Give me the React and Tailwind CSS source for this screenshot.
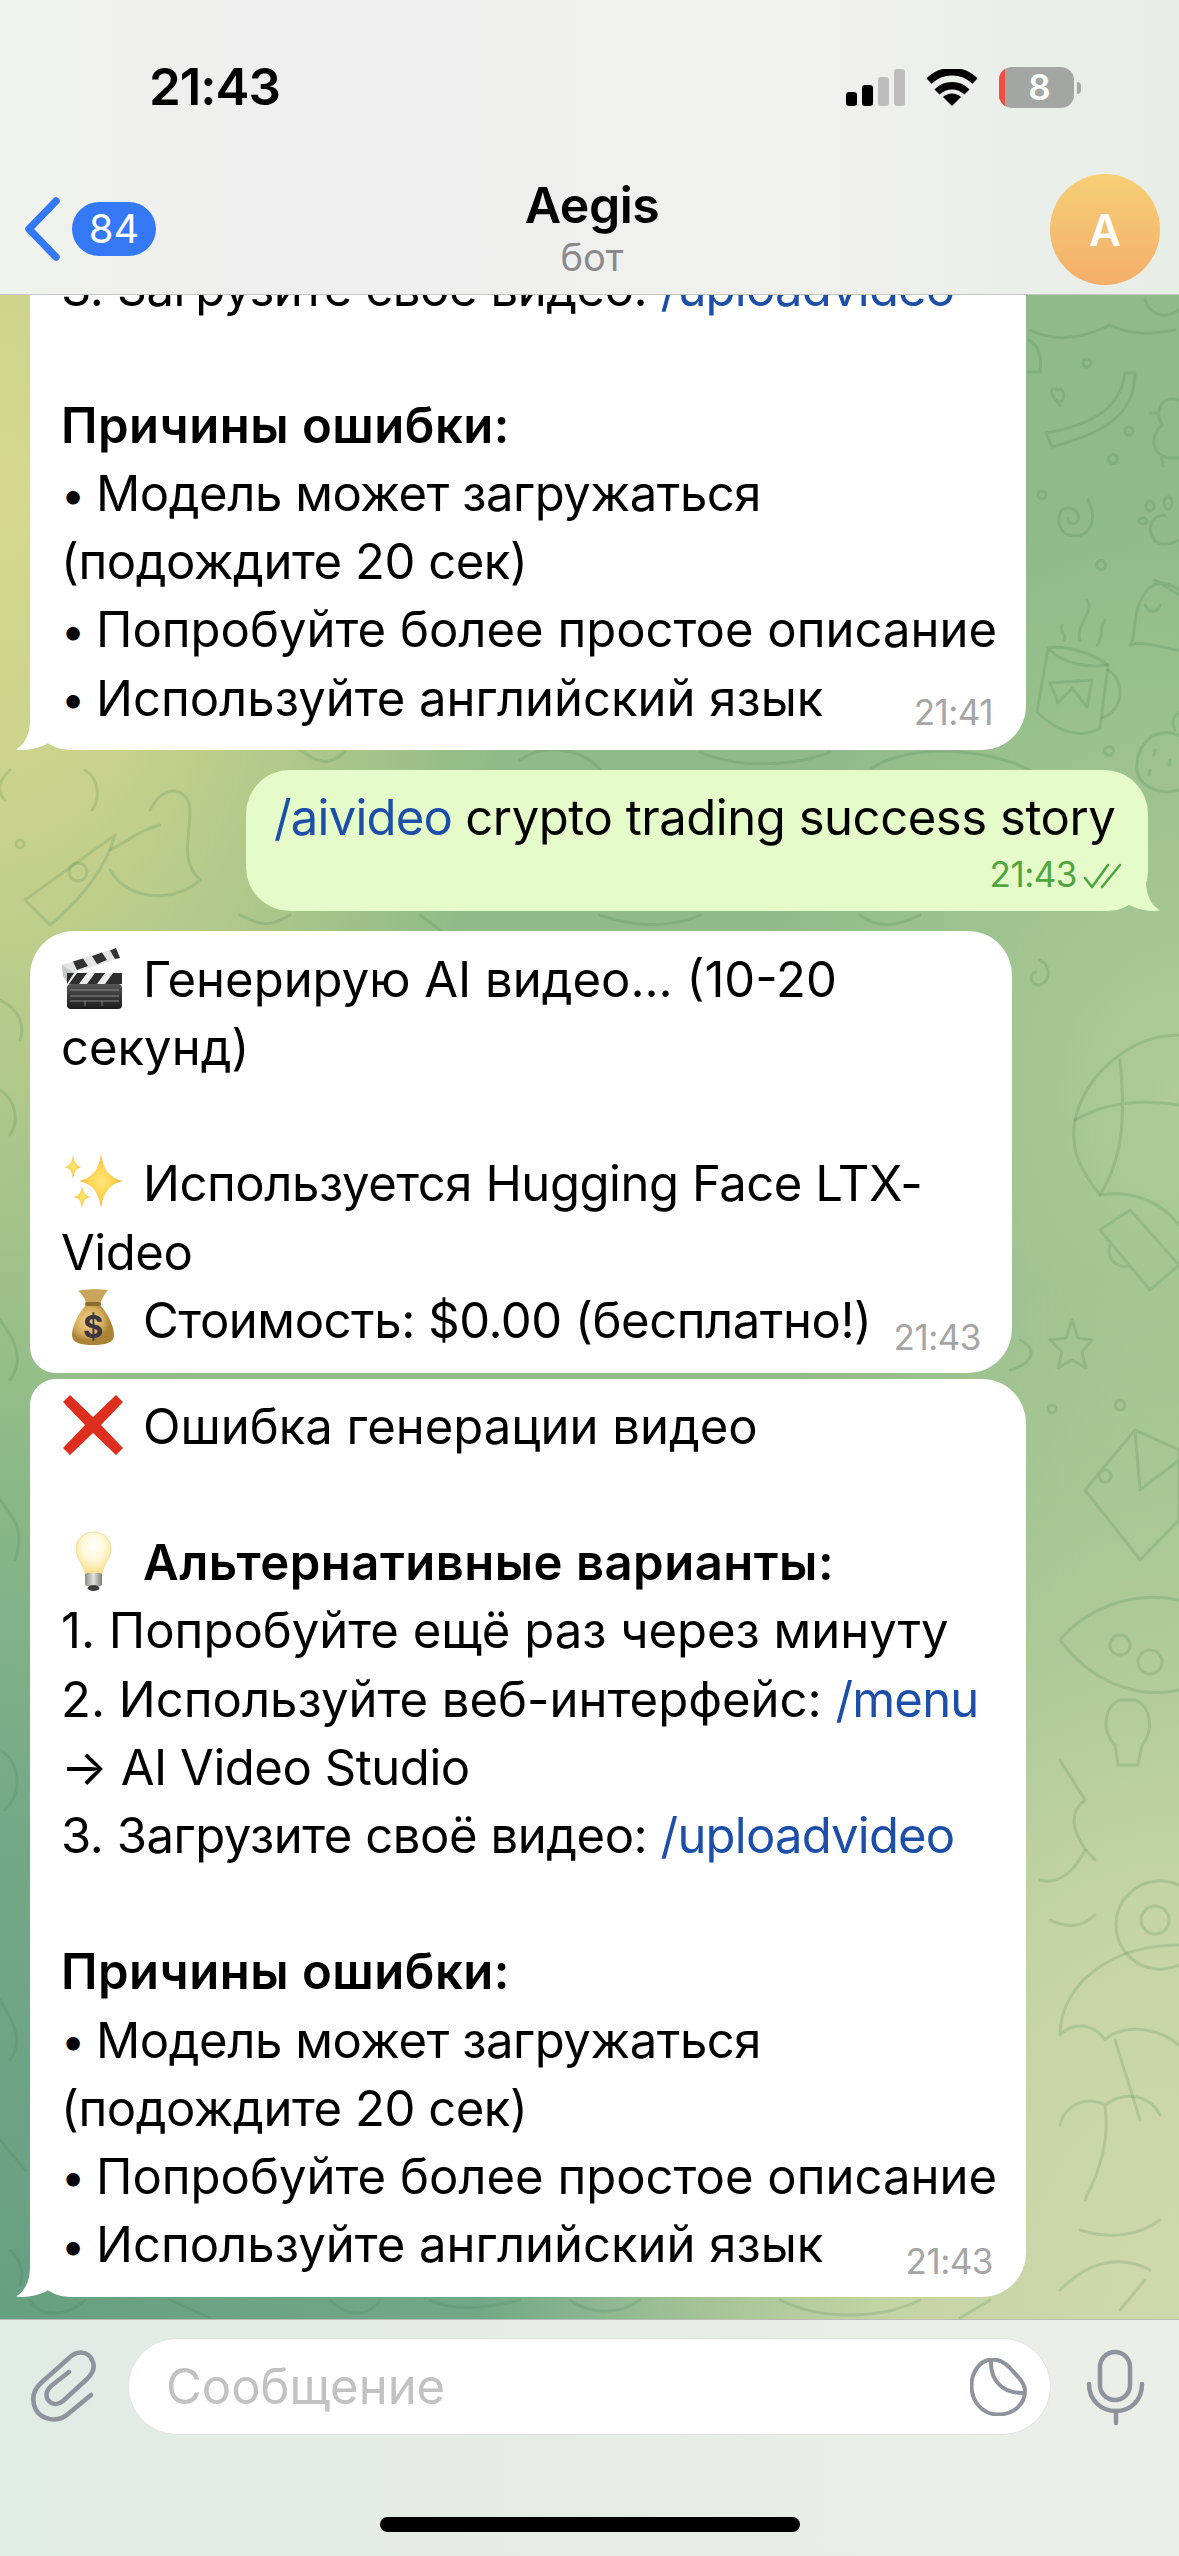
const errorLines = (
  <>
    <Line>
      <Emoji kind="cross" />
      Ошибка генерации видео
    </Line>
    <Line />
    <Line bold>
      <Emoji kind="bulb" />
      Альтернативные варианты:
    </Line>
    <Line>1. Попробуйте ещё раз через минуту</Line>
    <Line>
      2. Используйте веб-интерфейс:&nbsp;<Cmd>/menu</Cmd>
    </Line>
    <Line tight>→ AI Video Studio</Line>
    <Line tight>
      3. Загрузите своё видео:&nbsp;<Cmd>/uploadvideo</Cmd>
    </Line>
    <Line />
    <Line bold>Причины ошибки:</Line>
    <Line tight>
      <Dot />
      Модель может загружаться
    </Line>
    <Line tight>(подождите 20 сек)</Line>
    <Line>
      <Dot />
      Попробуйте более простое описание
    </Line>
    <Line>
      <Dot />
      Используйте английский язык
    </Line>
  </>
);

function Line({ children, bold, tight }) {
  let weight = "font-normal tracking-normal";
  if (bold) weight = "font-semibold tracking-[0.5px]";
  if (tight) weight = "font-normal tracking-[-0.45px]";
  return (
    <div className={`flex h-[68.2px] items-center whitespace-pre text-[49px] text-black ${weight}`}>
      {children}
    </div>
  );
}

function Dot() {
  return <span className="w-[35px] shrink-0 text-[43px]">•</span>;
}

function Cmd({ children }) {
  return <span className="tracking-[-0.8px] text-[#1d4fa8]">{children}</span>;
}

function star(cx, cy, rx, ry) {
  const k = 0.14;
  return `M${cx} ${cy - ry}Q${cx + rx * k} ${cy - ry * k} ${cx + rx} ${cy}Q${cx + rx * k} ${cy + ry * k} ${cx} ${cy + ry}Q${cx - rx * k} ${cy + ry * k} ${cx - rx} ${cy}Q${cx - rx * k} ${cy - ry * k} ${cx} ${cy - ry}Z`;
}

function Emoji({ kind }) {
  return (
    <svg viewBox="0 0 64 64" className="mr-[18px] h-[64px] w-[64px] shrink-0 -translate-y-[2px]">
      <defs>
        <radialGradient id="spark">
          <stop offset="0" stopColor="#ffe876" />
          <stop offset="0.6" stopColor="#fdd14f" />
          <stop offset="1" stopColor="#f7a93a" />
        </radialGradient>
        <radialGradient id="bag" cx="0.4" cy="0.4">
          <stop offset="0" stopColor="#f0d48a" />
          <stop offset="0.7" stopColor="#d4ac5c" />
          <stop offset="1" stopColor="#a98236" />
        </radialGradient>
        <radialGradient id="glass" cx="0.5" cy="0.35" r="0.65">
          <stop offset="0" stopColor="#ffffff" />
          <stop offset="0.5" stopColor="#fff8d8" />
          <stop offset="1" stopColor="#fbdf8e" />
        </radialGradient>
        <linearGradient id="screw" x1="0" x2="1">
          <stop offset="0" stopColor="#8b8b86" />
          <stop offset="0.5" stopColor="#e2e2dc" />
          <stop offset="1" stopColor="#7d7d78" />
        </linearGradient>
        <linearGradient id="board" x1="0" x2="0" y1="0" y2="1">
          <stop offset="0" stopColor="#555" />
          <stop offset="1" stopColor="#1c1c1c" />
        </linearGradient>
      </defs>
      {kind === "clapper" && (
        <g>
          <polygon points="1,19 55,2 59,12 5,29" fill="#e4e4e4" />
          <polygon points="12,15.5 22,12.5 27,20 16,24" fill="#333" />
          <polygon points="31,10 41,6.5 46,14 36,18" fill="#333" />
          <polygon points="49,4.5 55,2 59,12 54,13" fill="#333" />
          <polygon points="1,19 13,27 14,35 5,35 2,30" fill="#c2c7c9" />
          <rect x="6" y="27" width="55" height="11" fill="#2e2e2e" />
          <polygon points="18,38 26,27 34,27 26,38" fill="#ececec" />
          <polygon points="36,38 44,27 52,27 44,38" fill="#ececec" />
          <polygon points="6,38 13,27 16,27 8,38" fill="#ececec" />
          <rect x="6" y="38" width="55" height="25" rx="4" fill="url(#board)" />
          <path d="M9 44H58M9 50H58M9 55H58M24 55V60M41 55V60" stroke="#8a8a8a" strokeWidth="1" />
        </g>
      )}
      {kind === "sparkles" && (
        <g fill="url(#spark)">
          <path d={star(40, 31, 22, 27)} />
          <path d={star(12, 17, 8, 12)} />
          <path d={star(21, 47, 8, 11)} />
        </g>
      )}
      {kind === "money" && (
        <g>
          <path d="M17 5C23 3 40 3 47 4C44 8 40 13 39 19L25 19C25 13 21 8 17 5Z" fill="#c9a55c" />
          <path d="M25 19C18 26 11 40 11 49C11 57 20 59 32 59C44 59 53 57 53 49C53 40 46 26 39 19Z" fill="url(#bag)" />
          <rect x="24" y="16" width="16" height="4" rx="2" fill="#8c6b2c" />
          <text x="32" y="52" textAnchor="middle" fontSize="31" fontWeight="700" fontFamily="Inter, sans-serif" fill="#3c3640">
            $
          </text>
        </g>
      )}
      {kind === "cross" && (
        <polygon
          points="2,9 9,2 32,24 55,2 62,9 40,32 62,55 55,62 32,40 9,62 2,55 24,32"
          fill="#dd2e1f"
        />
      )}
      {kind === "bulb" && (
        <g>
          <path
            d="M32.5 3C22 3 15 11 15 20C15 28 22 35 24 44L41 44C43 35 50 28 50 20C50 11 43 3 32.5 3Z"
            fill="url(#glass)"
            stroke="#f8dc96"
            strokeWidth="1"
          />
          <rect x="24" y="44" width="17" height="13" rx="2" fill="url(#screw)" />
          <ellipse cx="32.5" cy="59" rx="6" ry="3" fill="#3d3d3d" />
        </g>
      )}
    </svg>
  );
}

function Time({ children, className, color = "text-[#a5a5a5]" }) {
  return (
    <span className={`absolute text-[35px] leading-none tracking-[-0.5px] ${color} ${className}`}>
      {children}
    </span>
  );
}

function Tail({ fill, flip, className }) {
  return (
    <svg
      viewBox="0 0 50 60"
      className={`absolute bottom-0 h-[60px] w-[50px] ${flip ? "-scale-x-100" : ""} ${className}`}
    >
      <path d="M14 0V30C14 45 8 55 0 59.5C12 61 27 58 35 51L42 38L14 20Z" fill={fill} />
    </svg>
  );
}

function Doodles() {
  return (
    <svg
      viewBox="0 295 1179 2024"
      className="absolute inset-0 h-full w-full"
      fill="none"
      stroke="#3c7a4a"
      strokeOpacity="0.18"
      strokeWidth="3"
      strokeLinecap="round"
      strokeLinejoin="round"
    >
      {/* right column, top */}
      <path d="M1030 330C1060 345 1090 335 1110 325C1130 335 1150 335 1175 330M1145 300C1150 315 1165 320 1179 310" />
      <path d="M1028 340C1040 345 1042 360 1040 372H1028" />
      <circle cx="1087" cy="363" r="4" />
      <circle cx="1129" cy="431" r="4" />
      <circle cx="1113" cy="459" r="4.5" />
      <circle cx="1042" cy="495" r="4" />
      <circle cx="1101" cy="565" r="4.5" />
      <circle cx="1109" cy="751" r="4.5" />
      <path d="M1046 433C1090 425 1120 410 1125 373L1135 373C1135 420 1095 435 1052 447Z" />
      <path d="M1060 405C1050 395 1048 385 1058 390C1066 385 1066 408 1056 400" />
      <path d="M1179 400C1160 395 1155 412 1162 425C1150 435 1150 455 1170 458H1179M1150 413H1158M1162 458L1163 466" />
      <path d="M1088 500C1098 520 1090 536 1075 536C1060 536 1055 520 1062 510C1070 505 1080 510 1078 520C1075 526 1068 524 1068 518" />
      <path d="M1165 515C1150 515 1148 530 1153 537C1155 547 1170 545 1179 540M1143 518a4 3 0 1 0 .1 0M1150 501a4 5 0 1 0 .1 0M1168 497a4 6 0 1 0 .1 0" />
      <path d="M1179 590C1160 575 1145 585 1137 610C1133 630 1135 640 1130 645C1150 640 1165 650 1179 650M1145 605C1150 615 1158 612 1160 605M1155 580L1179 595" />
      <path d="M1048 648L1037 712C1060 735 1085 738 1100 728L1108 665C1090 652 1065 645 1048 648Z" />
      <path d="M1050 650C1065 665 1090 668 1108 665M1108 670C1125 680 1125 710 1102 718" />
      <path d="M1050 683L1092 680L1087 707L1072 688L1058 703Z" />
      <path d="M1062 625C1058 632 1068 635 1064 640M1087 600C1095 612 1075 625 1080 640M1105 620C1098 628 1105 635 1097 645" />
      <path d="M1179 735C1150 725 1135 750 1137 770C1140 790 1165 795 1179 790M1155 750l-1 5M1170 760l-1 5M1150 770l-1 5M1175 730C1170 722 1175 715 1179 712" />
      {/* between the bubbles, left */}
      <path d="M150 810C165 780 190 790 190 810C190 840 180 860 200 880C180 900 130 905 110 870" />
      <path d="M110 850C130 840 140 830 160 825M85 770C100 780 100 800 92 810" />
      <path d="M25 900L115 835C105 870 80 900 50 925L25 900Z" />
      <circle cx="78" cy="872" r="9" />
      <path d="M10 770C0 780 -5 790 5 800M20 840a4 4 0 1 0 .1 0" />
      <path d="M0 1000C20 1010 25 1025 20 1040M0 1090C15 1100 20 1120 10 1135M0 1320C15 1340 25 1360 10 1380" />
      <path d="M300 750C320 765 330 765 345 752M520 760C540 745 580 745 600 770M700 752C740 770 800 765 830 752M870 770C900 745 980 745 1030 770" />
      <path d="M240 915C260 925 270 928 290 915M420 915L440 930M600 915C640 930 680 925 700 915M860 915C880 930 900 925 920 915" />
      {/* right of the lower bubbles */}
      <path d="M1040 960C1050 965 1052 980 1040 985C1030 985 1028 975 1036 972" />
      <path d="M1179 1035C1130 1035 1085 1075 1075 1120C1070 1150 1080 1170 1100 1195C1130 1190 1160 1200 1179 1225" />
      <path d="M1075 1120C1110 1100 1145 1100 1179 1105M1120 1060C1125 1110 1125 1155 1100 1195" />
      <path d="M1100 1230L1150 1290L1179 1265L1130 1210ZM1110 1245C1105 1260 1120 1270 1130 1265" />
      <path d="M1072 1320L1078 1338L1092 1340L1082 1352L1086 1368L1072 1360L1058 1368L1062 1352L1050 1340L1066 1338Z" />
      <path d="M1010 1370C1030 1365 1040 1350 1020 1340" />
      <path d="M1120 1400a5 5 0 1 0 .1 0M1052 1405a4 4 0 1 0 .1 0" />
      <path d="M1085 1490L1135 1430L1179 1450V1520L1140 1560L1085 1490ZM1135 1430L1140 1490L1179 1460M1105 1470a6 6 0 1 0 .1 0" />
      <path d="M1179 1600C1130 1590 1085 1610 1060 1640C1090 1680 1135 1700 1179 1690M1120 1635a10 10 0 1 0 .1 0M1150 1650a12 12 0 1 0 .1 0" />
      <path d="M1120 1700C1105 1705 1100 1730 1115 1745L1118 1765H1138L1142 1745C1155 1730 1150 1705 1135 1700Z" />
      <path d="M1060 1760L1085 1800C1065 1815 1075 1840 1095 1860" />
      <circle cx="1160" cy="1925" r="44" />
      <circle cx="1155" cy="1920" r="14" />
      <path d="M1040 1880C1060 1885 1075 1870 1085 1850M1050 1920C1070 1930 1085 1925 1095 1915" />
      <path d="M1060 2035C1060 1985 1110 1945 1179 1945M1060 2035C1075 2020 1095 2025 1105 2040C1120 2025 1155 2025 1179 2045M1115 2040L1140 2120" />
      <path d="M1085 2200C1100 2170 1110 2140 1105 2105M1105 2105C1085 2095 1065 2105 1060 2125M1105 2105C1125 2090 1150 2095 1160 2115" />
      <path d="M1080 2230C1110 2240 1140 2235 1160 2220M1060 2290C1090 2260 1120 2255 1150 2270M1120 2310L1145 2280" />
      {/* under the last bubble */}
      <path d="M30 2300C40 2320 70 2315 85 2300M170 2300L210 2318M330 2300C350 2320 370 2315 380 2300M430 2300C450 2310 480 2310 520 2300M570 2300C590 2315 620 2315 640 2300M780 2300C820 2320 880 2320 920 2300M960 2318L990 2300" />
      {/* far left strip */}
      <path d="M0 1500C15 1520 25 1530 15 1560M0 1750C18 1760 25 1790 5 1810M0 2000C12 2020 25 2040 10 2060M0 2140L25 2170M10 2250C20 2260 25 2270 20 2285" />
    </svg>
  );
}

function StatusBar() {
  return (
    <div className="flex h-[41px] items-center justify-between pl-[149px] pr-[98px]">
      <span className="text-[51px] font-semibold tracking-[-1px] text-black">21:43</span>
      <div className="flex items-center">
        <div className="flex h-[37px] items-end gap-[5px]">
          <div className="h-[14px] w-[11px] rounded-[3px] bg-black" />
          <div className="h-[21px] w-[11px] rounded-[3px] bg-black" />
          <div className="h-[29px] w-[11px] rounded-[3px] bg-[#bdbdbd]" />
          <div className="h-[37px] w-[11px] rounded-[3px] bg-[#bdbdbd]" />
        </div>
        <svg viewBox="0 0 50 37" className="ml-[22px] h-[37px] w-[50px]" fill="none" stroke="#000" strokeWidth="7.5">
          <path d="M2 12A33 33 0 0 1 48 12" />
          <path d="M10 23A21 21 0 0 1 40 23" />
          <path d="M25 37L16 28A13 13 0 0 1 34 28Z" fill="#000" stroke="none" />
        </svg>
        <div className="relative ml-[22px] flex h-[41px] w-[75px] items-center justify-center overflow-hidden rounded-[13px] bg-[#a3a6a2] pl-[6px]">
          <div className="absolute inset-y-0 left-0 w-[6px] bg-[#ef4f40]" />
          <span className="text-[35px] font-semibold leading-none text-white">8</span>
        </div>
        <div className="ml-[3px] h-[12px] w-[4px] rounded-r-full bg-[#a3a6a2]" />
      </div>
    </div>
  );
}

function Header() {
  return (
    <header className="relative z-20 h-[295px] shrink-0 border-b border-[#c6c8c5] bg-[linear-gradient(90deg,#f0f2ec_0%,#efefef_20%,#f0f0ef_70%,#e7eee6_100%)] pt-[67px]">
      <StatusBar />
      <div className="mt-[66px] grid h-[111px] grid-cols-[1fr_auto_1fr] items-start pl-[24px] pr-[19px]">
        <div className="flex items-center pt-[23px]">
          <svg viewBox="0 0 36 64" className="h-[64px] w-[36px]" fill="none" stroke="#3478f6" strokeWidth="7.5" strokeLinecap="round" strokeLinejoin="round">
            <path d="M32 4L5 32L32 60" />
          </svg>
          <div className="ml-[12px] flex h-[54px] w-[84px] items-center justify-center rounded-full bg-[#3478f6] text-[40px] leading-none text-white">
            84
          </div>
        </div>
        <div className="flex flex-col items-center">
          <span className="text-[50px] font-semibold leading-[62px] tracking-[-0.5px] text-black">Aegis</span>
          <span className="text-[38px] leading-[42px] text-[#8a8a8a]">бот</span>
        </div>
        <div className="flex justify-end">
          <div className="flex h-[111px] w-[110px] items-center justify-center rounded-full bg-[linear-gradient(180deg,#f6cf76,#f4ae6b)] text-[44px] font-semibold text-white">
            A
          </div>
        </div>
      </div>
    </header>
  );
}

function Composer() {
  return (
    <footer className="relative z-20 flex h-[237px] shrink-0 flex-col border-t border-[#b9bdb5] bg-[linear-gradient(90deg,#e1ebe5_0%,#e6ece6_50%,#ecefe8_100%)]">
      <div className="flex items-start pl-[28px] pt-[18px]">
        <svg viewBox="28 26 70 78" className="mt-[8px] h-[78px] w-[70px] shrink-0" fill="none" stroke="#8e939e" strokeWidth="4.5" strokeLinecap="round">
          <path d="M91 75L68 94C58 103 42 100 36 90C31 80 33 70 42 62L69 38C77 30 88 31 92 40C96 47 92 54 87 59L63 81C57 86 51 84 48 80C45 75 47 70 51 66L69 52" />
        </svg>
        <div className="ml-[30px] flex h-[97px] w-[923px] shrink-0 items-center justify-between rounded-full border border-[#e2e4e1] bg-white pl-[37px] pr-[22px]">
          <span className="text-[49px] text-[#c2c2c2]">Сообщение</span>
          <svg viewBox="0 0 58 58" className="h-[58px] w-[58px]" fill="none" stroke="#8e939e" strokeWidth="4">
            <path d="M23 1.5C10 1.5 1.5 14 1.5 28C1.5 44 13 56.5 28 56.5C44 56.5 55 46 55 33C55 28 53 25 50 21L39 9C34 4 29 1.5 23 1.5Z" />
            <path d="M21 2C20 22 32 36 55 35" />
          </svg>
        </div>
        <svg viewBox="0 0 62 78" className="ml-[34px] mt-[10px] h-[78px] w-[62px] shrink-0" fill="none" stroke="#8e939e" strokeWidth="4.5" strokeLinecap="round">
          <rect x="15" y="4" width="30" height="48" rx="15" />
          <path d="M4 36C4 52 16 63 31 63C46 63 57 52 57 36" />
          <path d="M31 63V75" />
        </svg>
      </div>
      <div className="mt-[82px] flex justify-center">
        <div className="h-[15px] w-[420px] rounded-full bg-black" />
      </div>
    </footer>
  );
}

export default function App() {
  return (
    <div className="flex h-[2556px] w-[1179px] flex-col overflow-hidden font-['Inter','Noto_Sans',sans-serif]">
      <Header />
      <main className="relative flex min-h-0 flex-1 flex-col justify-end overflow-hidden bg-[#8fbb88] bg-[radial-gradient(ellipse_520px_950px_at_0px_200px,#d6d88e_0%,#c8d28c_35%,transparent_100%),radial-gradient(ellipse_700px_1050px_at_1179px_2024px,#d0d9ae_0%,#c5d4a5_40%,transparent_100%),radial-gradient(ellipse_450px_600px_at_1179px_800px,#aecb98_0%,transparent_100%),radial-gradient(ellipse_1000px_900px_at_0px_2024px,#679f82_0%,#74a987_55%,transparent_100%)] pb-[22px]">
        <Doodles />

        <div className="relative z-10 ml-[30px] w-[996px] shrink-0 rounded-t-[20px] rounded-b-[44px] rounded-bl-[40px] bg-white pb-[18px] pl-[31px] pt-[14px]">
          {errorLines}
          <Tail fill="#ffffff" className="-left-[14px]" />
          <Time className="bottom-[20px] right-[33px]">21:41</Time>
        </div>

        <div className="relative z-10 ml-[246px] mt-[20px] h-[141px] w-[902px] shrink-0 rounded-[44px] rounded-br-[40px] bg-[#e5fbc9] pl-[28px] pt-[13px]">
          <Line tight>
            <Cmd>/aivideo</Cmd> crypto trading success story
          </Line>
          <Tail fill="#e5fbc9" flip className="-right-[12px]" />
          <Time color="text-[#4da63f]" className="bottom-[19px] right-[71px]">21:43</Time>
          <svg viewBox="0 0 42 26" className="absolute bottom-[22px] right-[23px] h-[26px] w-[42px]" fill="none" stroke="#4da63f" strokeWidth="2.5" strokeLinecap="round" strokeLinejoin="round">
            <path d="M2 15L9 24L25 2M19 24L37 2" />
          </svg>
        </div>

        <div className="relative z-10 ml-[30px] mt-[20px] w-[982px] shrink-0 rounded-[44px] rounded-bl-[26px] bg-white pb-[18px] pl-[31px] pt-[14px]">
          <Line>
            <Emoji kind="clapper" />
            Генерирую AI видео... (10-20
          </Line>
          <Line>секунд)</Line>
          <Line />
          <Line tight>
            <Emoji kind="sparkles" />
            Используется Hugging Face LTX-
          </Line>
          <Line tight>Video</Line>
          <Line tight>
            <Emoji kind="money" />
            Стоимость: $0.00 (бесплатно!)
          </Line>
          <Time className="bottom-[18px] right-[31px]">21:43</Time>
        </div>

        <div className="relative z-10 ml-[30px] mt-[6px] w-[996px] shrink-0 rounded-[44px] rounded-tl-[26px] rounded-bl-[40px] bg-white pb-[18px] pl-[31px] pt-[14px]">
          {errorLines}
          <Tail fill="#ffffff" className="-left-[14px]" />
          <Time className="bottom-[18px] right-[33px]">21:43</Time>
        </div>
      </main>
      <Composer />
    </div>
  );
}
